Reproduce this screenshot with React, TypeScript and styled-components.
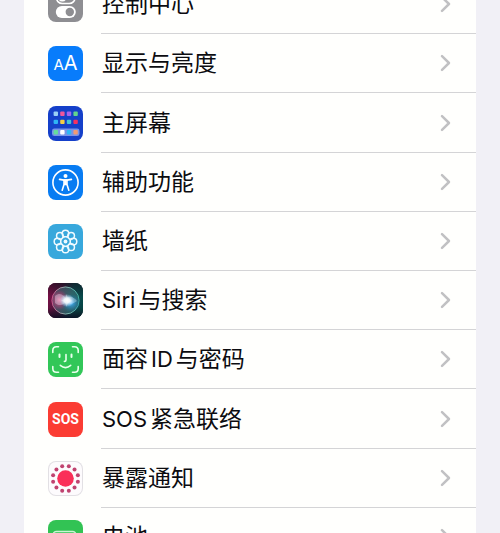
import React from "react";
import styled, { createGlobalStyle } from "styled-components";

const GlobalStyle = createGlobalStyle`
  * { box-sizing: border-box; }
  body {
    margin: 0;
    background: #f1f0f6;
    color: #0c0c10;
    font-family: Inter, "Noto Sans CJK SC", sans-serif;
  }
`;

const Screen = styled.main`
  height: 100vh;
  overflow: hidden;
  padding: 0 24px;
`;

const List = styled.ul`
  display: flex;
  flex-direction: column;
  min-height: calc(100vh + 59px);
  margin: -25px 0 0;
  padding: 0;
  list-style: none;
  background: #fffffd;
`;

const Item = styled.li`
  display: flex;
  flex: 1 0 59px;
`;

const RowLink = styled.a`
  display: flex;
  flex: 1;
  align-items: center;
  gap: 18px;
  padding-left: 24px;
  color: inherit;
  text-decoration: none;
`;

const Tile = styled.span<{ $bg: string; $outlined?: boolean }>`
  display: flex;
  flex: none;
  align-items: center;
  justify-content: center;
  width: 35px;
  height: 35px;
  overflow: hidden;
  border-radius: 8px;
  background: ${(p) => p.$bg};
  box-shadow: ${(p) => (p.$outlined ? "inset 0 0 0 1px #e2e0e4" : "none")};
  color: #fff;

  svg { display: block; width: 35px; height: 35px; }
`;

const Content = styled.span`
  display: flex;
  flex: 1;
  align-self: stretch;
  align-items: center;
  justify-content: space-between;
  padding: 0 24px 0 1px;
  border-bottom: 1px solid #d4d4d6;
`;

const Label = styled.span`
  display: flex;
  align-items: center;
  gap: 3px;
  font-size: 23px;
  line-height: 32px;
  white-space: nowrap;
`;

const Latin = styled.span`
  font-size: 22px;
`;

const Letters = styled.span`
  display: flex;
  align-items: baseline;
  font-size: 20px;
  line-height: 24px;
`;

const SmallLetter = styled.span`
  font-size: 15px;
`;

const Sos = styled.span`
  font-family: "Liberation Sans Narrow", Roboto, sans-serif;
  font-size: 14px;
  font-weight: 700;
  line-height: 20px;
`;

const Chevron = () => (
  <svg width="12" height="18" viewBox="0 0 12 18" fill="none" aria-hidden="true">
    <path d="M2 2.2 L9 9 L2 15.8" stroke="#c1c1c3" strokeWidth="2.5" strokeLinecap="round" strokeLinejoin="round" />
  </svg>
);

const ControlGlyph = () => (
  <svg viewBox="0 0 35 35" fill="none">
    <rect x="8.5" y="5" width="18.5" height="11.5" rx="5.75" stroke="#fff" strokeWidth="1.6" />
    <circle cx="14.3" cy="10.8" r="3.8" fill="#fff" />
    <rect x="7.8" y="19" width="20" height="12" rx="6" fill="#fff" />
    <circle cx="21.8" cy="25" r="4.2" fill="#8e8e92" />
  </svg>
);

const appColors = [
  ["#9ad0f5", "#f0569b", "#a364ee", "#62d48c"],
  ["#2fb5f5", "#f4cf45", "#42c5d8", "#f5315f"],
];
const dockColors = ["#65dd9b", "#ffffff", "#2db8f5", "#f19b72"];

const HomeGlyph = () => (
  <svg viewBox="0 0 35 35">
    {appColors.map((row, r) =>
      row.map((fill, c) => (
        <rect key={`${r}-${c}`} x={5.6 + c * 6.6} y={5.5 + r * 8.2} width="4.4" height="4.4" rx="1" fill={fill} />
      ))
    )}
    <rect x="4" y="22.5" width="27.5" height="7.6" rx="2.4" fill="#7894e8" />
    {dockColors.map((fill, c) => (
      <rect key={fill} x={5.6 + c * 6.6} y="24.1" width="4.4" height="4.4" rx="1" fill={fill} />
    ))}
  </svg>
);

const AccessGlyph = () => (
  <svg viewBox="0 0 35 35" fill="none" stroke="#fff" strokeLinecap="round" strokeLinejoin="round">
    <circle cx="17.5" cy="17.5" r="12.6" strokeWidth="1.6" />
    <circle cx="17.5" cy="10.9" r="2" fill="#fff" stroke="none" />
    <path d="M11.6 14.4 L16 15.2 H19 L23.4 14.4" strokeWidth="1.7" />
    <path d="M16 15 H19 V19.4 L20.8 25.3 M16 15 V19.4 L14.2 25.3 M16.2 19.5 H18.8" strokeWidth="1.6" />
    <path d="M16.2 15.2 H18.8 V19.8 H16.2Z" fill="#fff" stroke="none" />
  </svg>
);

const polar = (count: number, radius: number, shift = 0) =>
  Array.from({ length: count }, (_, i) => {
    const a = ((i + shift) * 2 * Math.PI) / count;
    return { x: 17.5 + radius * Math.cos(a), y: 17.5 + radius * Math.sin(a) };
  });

const WallpaperGlyph = () => (
  <svg viewBox="0 0 35 35" fill="none" stroke="#effaff">
    {polar(8, 8).map((p, i) => (
      <circle key={i} cx={p.x} cy={p.y} r="3.3" strokeWidth="1.5" />
    ))}
    {polar(8, 4.4, 0.5).map((p, i) => (
      <circle key={i} cx={p.x} cy={p.y} r="0.8" fill="#effaff" stroke="none" />
    ))}
    <circle cx="17.5" cy="17.5" r="1.9" fill="#effaff" stroke="none" />
  </svg>
);

const SiriGlyph = () => (
  <svg viewBox="0 0 35 35">
    <defs>
      <linearGradient id="siriBase" x1="0" y1="0.4" x2="1" y2="0.6">
        <stop offset="0" stopColor="#7a0f45" />
        <stop offset="0.35" stopColor="#4c1a42" />
        <stop offset="0.65" stopColor="#0f4a52" />
        <stop offset="1" stopColor="#064a48" />
      </linearGradient>
      <linearGradient id="siriShade" x1="0" y1="0" x2="0" y2="1">
        <stop offset="0" stopColor="#101018" stopOpacity="0.6" />
        <stop offset="0.4" stopColor="#101018" stopOpacity="0" />
        <stop offset="0.7" stopColor="#101018" stopOpacity="0.1" />
        <stop offset="1" stopColor="#0b0b20" stopOpacity="0.85" />
      </linearGradient>
      <linearGradient id="siriRing" x1="0" y1="0" x2="1" y2="0">
        <stop offset="0" stopColor="#e0659a" />
        <stop offset="0.5" stopColor="#9fcfc4" />
        <stop offset="1" stopColor="#48c3b4" />
      </linearGradient>
      <radialGradient id="siriPink">
        <stop offset="0" stopColor="#f0709f" />
        <stop offset="1" stopColor="#c5246b" stopOpacity="0" />
      </radialGradient>
      <radialGradient id="siriBlue">
        <stop offset="0" stopColor="#4bb8ff" />
        <stop offset="1" stopColor="#176ca4" stopOpacity="0" />
      </radialGradient>
      <radialGradient id="siriGlow">
        <stop offset="0" stopColor="#fff" />
        <stop offset="0.4" stopColor="#f2faff" stopOpacity="0.9" />
        <stop offset="1" stopColor="#b9deff" stopOpacity="0" />
      </radialGradient>
    </defs>
    <rect width="35" height="35" fill="url(#siriBase)" />
    <rect width="35" height="35" fill="url(#siriShade)" />
    <circle cx="17.5" cy="17.5" r="13.6" fill="#4f8f90" fillOpacity="0.45" stroke="url(#siriRing)" strokeOpacity="0.8" strokeWidth="1" />
    <ellipse cx="11.5" cy="17" rx="9" ry="10" fill="url(#siriPink)" />
    <ellipse cx="23" cy="20" rx="10" ry="9" fill="url(#siriBlue)" />
    <path d="M7 13 C12 9 16 12 18 16 C21 12 26 14 29 18 C25 21 21 22 18 18 C16 23 10 23 7 20Z" fill="#e6f4ff" fillOpacity="0.35" />
    <ellipse cx="19" cy="17.5" rx="7.5" ry="6.5" fill="url(#siriGlow)" />
    <path d="M18.5 11 L20 16 L25 18 L20 19.5 L18.5 24 L17.2 19.5 L13 17.5 L17.2 16Z" fill="#fff" fillOpacity="0.3" />
  </svg>
);

const FaceGlyph = () => (
  <svg viewBox="0 0 35 35" fill="none" stroke="#e9ffed" strokeWidth="1.6" strokeLinecap="round" strokeLinejoin="round">
    <path d="M4.8 10.5 V8.5 Q4.8 4.8 8.5 4.8 H10.5 M24.5 4.8 H26.5 Q30.2 4.8 30.2 8.5 V10.5 M30.2 24.5 V26.5 Q30.2 30.2 26.5 30.2 H24.5 M10.5 30.2 H8.5 Q4.8 30.2 4.8 26.5 V24.5" />
    <path d="M11.5 12.5 V15 M23.5 12.5 V15" strokeWidth="2" />
    <path d="M18 12.5 V18 Q18 19.4 16.4 19.4 M12.3 23.3 Q17.5 27.8 22.7 23.3" />
  </svg>
);

const ExposureGlyph = () => (
  <svg viewBox="0 0 35 35">
    <circle cx="17.5" cy="17.5" r="8.3" fill="#fa2f59" />
    {polar(12, 12.8, 0.5).map((p, i) => (
      <circle key={i} cx={p.x} cy={p.y} r="2" fill="#c04370" />
    ))}
  </svg>
);

const BatteryGlyph = () => (
  <svg viewBox="0 0 35 35" fill="none">
    <rect x="5" y="11.5" width="23" height="12.5" rx="3.5" stroke="#c9f5d4" strokeWidth="1.4" />
    <rect x="7.3" y="13.8" width="18.4" height="7.9" rx="1.8" fill="#fff" />
    <path d="M30 15.5 Q32 17.7 30 20" fill="#fff" />
  </svg>
);

interface Setting {
  id: string;
  label: React.ReactNode;
  bg: string;
  outlined?: boolean;
  icon: React.ReactNode;
}

const settings: Setting[] = [
  { id: "control", label: "控制中心", bg: "#8e8e92", icon: <ControlGlyph /> },
  {
    id: "display",
    label: "显示与亮度",
    bg: "#087cfb",
    icon: <Letters><SmallLetter>A</SmallLetter>A</Letters>,
  },
  { id: "home", label: "主屏幕", bg: "#1540c9", icon: <HomeGlyph /> },
  { id: "accessibility", label: "辅助功能", bg: "#087cf2", icon: <AccessGlyph /> },
  { id: "wallpaper", label: "墙纸", bg: "#38a8dc", icon: <WallpaperGlyph /> },
  { id: "siri", label: <><Latin>Siri</Latin>与搜索</>, bg: "#1b1525", icon: <SiriGlyph /> },
  { id: "faceid", label: <>面容<Latin>ID</Latin>与密码</>, bg: "#32c758", icon: <FaceGlyph /> },
  { id: "sos", label: <><Latin>SOS</Latin>紧急联络</>, bg: "#fb3c33", icon: <Sos>SOS</Sos> },
  { id: "exposure", label: "暴露通知", bg: "#fdfbfd", outlined: true, icon: <ExposureGlyph /> },
  { id: "battery", label: "电池", bg: "#32c354", icon: <BatteryGlyph /> },
];

export default function App() {
  return (
    <>
      <GlobalStyle />
      <Screen lang="zh-CN">
        <List>
          {settings.map((s) => (
            <Item key={s.id}>
              <RowLink href={`#${s.id}`}>
                <Tile $bg={s.bg} $outlined={s.outlined} aria-hidden="true">{s.icon}</Tile>
                <Content>
                  <Label>{s.label}</Label>
                  <Chevron />
                </Content>
              </RowLink>
            </Item>
          ))}
        </List>
      </Screen>
    </>
  );
}
